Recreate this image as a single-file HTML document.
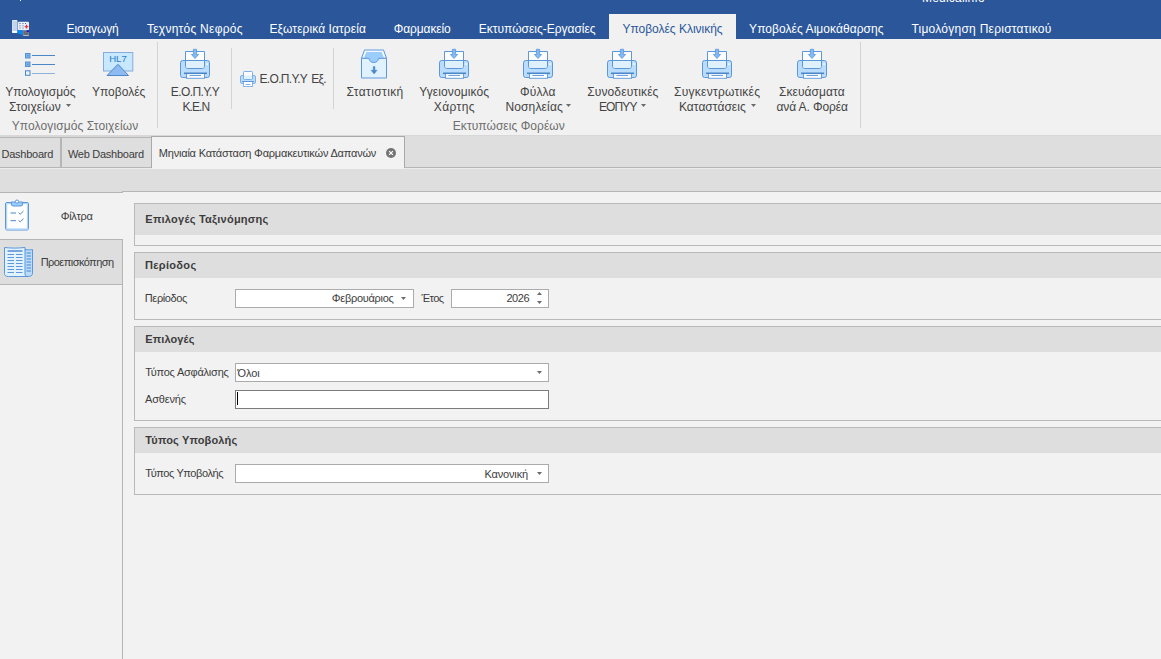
<!DOCTYPE html>
<html lang="el">
<head>
<meta charset="utf-8">
<title>Medicalinfo</title>
<style>
html,body{margin:0;padding:0;}
body{width:1161px;height:659px;overflow:hidden;position:relative;background:#f2f2f2;font-family:"Liberation Sans",sans-serif;font-size:11px;color:#3c3c3c;}
.abs,.t,.box{position:absolute;}
.t{white-space:nowrap;line-height:14px;height:14px;}
/* title + ribbon tabs */
#titlebar{left:0;top:0;width:1161px;height:39px;background:#2b579a;}
#apptitle{left:922px;top:-9px;font-size:12px;color:#fff;letter-spacing:0.2px;}
.rt{color:#fff;font-size:12px;top:22px;}
#rtab-active{left:609px;top:14px;width:127px;height:26px;background:#f1f1f1;}
#rt6{color:#2b579a;}
/* ribbon */
#ribbon{left:0;top:39px;width:1161px;height:96px;background:#f1f1f1;}
.rl{font-size:12px;color:#444;top:85px;text-align:center;}
.rl2{top:100px;}
.gcap{font-size:12px;color:#6e6e6e;top:119px;}
.vsep{width:1px;background:#d4d4d4;}
.arrow{width:0;height:0;border-left:3px solid transparent;border-right:3px solid transparent;border-top:3px solid #555;}
/* document tabs */
#tabstrip{left:0;top:136px;width:1161px;height:32px;background:#dedede;}
#band{left:0;top:169px;width:1161px;height:23px;background:#dedede;}
.dt{font-size:11px;color:#3c3c3c;top:146px;}
/* nav */
.nav{font-size:11px;color:#3c3c3c;}
/* groups */
.grp{left:134px;width:1040px;border:1px solid #b9b9b9;background:#f2f2f2;box-sizing:border-box;}
.ghd{left:135px;width:1030px;background:#dedede;}
.gt{font-weight:bold;font-size:11px;color:#3c3c3c;left:145px;}
.lb{left:145px;font-size:11px;color:#3c3c3c;}
.inp{background:#fff;border:1px solid #ababab;box-sizing:border-box;height:17px;}
.val{font-size:11px;color:#3c3c3c;}

.ln{background:#b6b6b6;}
#tab-active{left:152px;top:137px;width:252px;height:32px;background:#f2f2f2;}
#nav-sel{left:0;top:240px;width:122px;height:44px;background:#dedede;}
.arr{width:0;height:0;border-left:3px solid transparent;border-right:3px solid transparent;border-top:3px solid #6a6a6a;}
.arru{width:0;height:0;border-left:3px solid transparent;border-right:3px solid transparent;border-bottom:3px solid #6a6a6a;}
</style>
</head>
<body>

<!-- ===== title bar and ribbon page headers ===== -->
<div id="titlebar" class="box"></div>
<div id="apptitle" class="t">Medicalinfo</div>
<div class="box" style="left:20px;top:0;width:1px;height:1px;background:#f4f6fa"></div>
<svg class="abs" style="left:11px;top:19px" width="19" height="18" viewBox="0 0 19 18">
<rect x="1" y="1" width="5.500" height="13" rx="1" fill="#e4ecf8"/>
<path d="M1.500 3h4.500M1.500 5h4.500M1.500 7h4.500M1.500 9h4.500M1.500 11h4.500" stroke="#9fb9e0" stroke-width="0.900" fill="none"/>
<rect x="1.500" y="12" width="4.500" height="1.800" fill="#fff"/>
<rect x="7" y="2.800" width="11" height="8.500" rx="1" fill="#eaf0fa"/>
<path d="M8.500 4.500h1M11.500 4.500h1M8.500 6.800h1M11.500 6.800h1M8.500 9h1M11.500 9h1M14 4.500h1" stroke="#3a64b0" stroke-width="1" fill="none"/>
<path d="M13.700 7.600h3.600M15.500 5.800v3.600" stroke="#e8383a" stroke-width="1.400" fill="none"/>
<path d="M6.500 11l5.500 0.300v5.200l-5.500-2.300z" fill="#0a86ee"/>
<rect x="12" y="11.300" width="6" height="5.500" fill="#8d9098"/>
<rect x="15.500" y="11.300" width="2.500" height="2" fill="#1320c8"/>
<path d="M12.500 13h3M12.500 15h5" stroke="#4a4640" stroke-width="1" fill="none"/>
<path d="M12.500 16.500h5" stroke="#c9ccd4" stroke-width="0.800" fill="none"/>
</svg>
<div id="rtab-active" class="box"></div>
<div id="rt1" class="t rt" style="left:66.5px;letter-spacing:-0.11px">Εισαγωγή</div>
<div id="rt2" class="t rt" style="left:147.0px;letter-spacing:0.25px">Τεχνητός Νεφρός</div>
<div id="rt3" class="t rt" style="left:269.5px;letter-spacing:0.08px">Εξωτερικά Ιατρεία</div>
<div id="rt4" class="t rt" style="left:393.8px;letter-spacing:-0.12px">Φαρμακείο</div>
<div id="rt5" class="t rt" style="left:478.8px;letter-spacing:-0.01px">Εκτυπώσεις-Εργασίες</div>
<div id="rt6" class="t rt" style="left:622.5px;letter-spacing:-0.02px">Υποβολές Κλινικής</div>
<div id="rt7" class="t rt" style="left:749.1px;letter-spacing:0.06px">Υποβολές Αιμοκάθαρσης</div>
<div id="rt8" class="t rt" style="left:911.4px;letter-spacing:0.25px">Τιμολόγηση Περιστατικού</div>

<!-- ===== ribbon ===== -->
<div id="ribbon" class="box"></div>
<div class="box vsep" style="left:157px;top:42px;height:86px"></div>
<div class="box vsep" style="left:231px;top:48px;height:61px"></div>
<div class="box vsep" style="left:333px;top:48px;height:61px"></div>
<div class="box vsep" style="left:860px;top:42px;height:86px"></div>

<svg class="abs" style="left:24px;top:52px" width="33" height="26" viewBox="0 0 33 26">
<rect x="1.500" y="1.500" width="4.500" height="4.500" fill="#7fb4ee" stroke="#5590d4"/><rect x="3.200" y="3.200" width="1.200" height="1.200" fill="#4a86c8"/>
<rect x="1.500" y="10" width="4.500" height="4.500" fill="#7fb4ee" stroke="#5590d4"/><rect x="3.200" y="11.700" width="1.200" height="1.200" fill="#4a86c8"/>
<rect x="1.500" y="18.800" width="4.500" height="4.500" fill="#e9f4ff" stroke="#4a86c8"/>
<path d="M8 3.500h23M8 12.500h23" stroke="#4a86c8" stroke-width="1" fill="none"/>
<path d="M8 21.500h23" stroke="#8fb2dc" stroke-width="1" fill="none"/>
</svg>
<svg class="abs" style="left:102px;top:51px" width="33" height="27" viewBox="0 0 33 27">
<rect x="1.500" y="1.500" width="29.300" height="18.500" fill="#c7e8ff" stroke="#86abdd"/>
<path d="M16 13.300l10.500 11.200h-21.500z" fill="#8dbaf1" stroke="#4f86cc" stroke-linejoin="round"/>
<text x="16" y="11.400" font-family="Liberation Sans, sans-serif" font-size="9.600" text-anchor="middle" fill="#2a7fbe">HL7</text>
</svg>
<svg class="abs" style="left:179px;top:47px" width="32" height="33" viewBox="-1 -2 32 33">
<rect x="0.5" y="11.5" width="29" height="17" rx="2.2" fill="#b9dcff" stroke="#5b97d9"/>
<path d="M5.500 2.500h19v14.500a2.500 2.500 0 0 1-2.500 2.500h-14a2.500 2.500 0 0 1-2.500-2.500z" fill="#fff" stroke="#5b97d9"/>
<path d="M6 12h18v5a2 2 0 0 1-2 2h-14a2 2 0 0 1-2-2z" fill="#dff0ff"/>
<path d="M5.500 11.500h19" stroke="#5b97d9" fill="none"/>
<path d="M13.400 0.300h3.200v5.200h2l-3.600 4l-3.600-4h2z" fill="#80bbf6" stroke="#5b97d9" stroke-width="0.800"/>
<rect x="26.200" y="14.200" width="1.800" height="1.800" fill="#f2f9ff"/>
<rect x="6.500" y="24.500" width="18" height="4.800" fill="#fff" stroke="#6aa0dc"/>
<path d="M4 24.300h23" stroke="#4a86c8" stroke-width="1.600" fill="none"/>
<path d="M9.500 26.500h11.500" stroke="#6aa0dc" fill="none"/>
</svg>
<svg class="abs" style="left:239px;top:70px" width="18" height="18" viewBox="0 0 18 18">
<rect x="1.500" y="5.500" width="15" height="8" rx="1.500" fill="#b9dcff" stroke="#7fb0e4"/>
<rect x="4.500" y="1.500" width="9" height="8" rx="0.800" fill="#fff" stroke="#7fb0e4"/>
<rect x="5" y="5.500" width="8" height="3.500" fill="#dff0ff"/>
<rect x="4.500" y="11.500" width="9" height="5" fill="#fff" stroke="#8ab6e4"/>
<path d="M3 11.500h12" stroke="#5b97d9" stroke-width="1" fill="none"/>
<path d="M6.500 14.500h5" stroke="#8ab6e4" fill="none"/>
</svg>
<svg class="abs" style="left:360px;top:48px" width="29" height="32" viewBox="0 0 29 32">
<path d="M1.500 10.300l3-8.300h19l3 8.300z" fill="#f4faff" stroke="#5b97d9" stroke-linejoin="round"/>
<path d="M4 10l2.300-6h15.400l2.300 6z" fill="#9bcdfc"/>
<rect x="8.500" y="9" width="11" height="5.500" fill="#9bcdfc"/>
<path d="M4.200 1.800h19.400" stroke="#a9c9ea" stroke-width="1.200" fill="none"/>
<path d="M1.500 10.300h7.300c1 3 2.400 4.200 5 4.200s4-1.200 5-4.200h7.700v19.700h-25z" fill="#e0f1ff" stroke="#5b97d9" stroke-linejoin="round"/>
<path d="M1.500 30.200h25" stroke="#a9c9ea" stroke-width="1.200" fill="none"/>
<path d="M13.300 18.600h1.600v3.600h2.200l-3 3.700l-3-3.700h2.200z" fill="#4a86c8" stroke="#4a86c8" stroke-width="0.500"/>
</svg>
<svg class="abs" style="left:438px;top:47px" width="32" height="33" viewBox="-1 -2 32 33">
<rect x="0.5" y="11.5" width="29" height="17" rx="2.2" fill="#b9dcff" stroke="#5b97d9"/>
<path d="M5.500 2.500h19v14.500a2.500 2.500 0 0 1-2.500 2.500h-14a2.500 2.500 0 0 1-2.500-2.500z" fill="#fff" stroke="#5b97d9"/>
<path d="M6 12h18v5a2 2 0 0 1-2 2h-14a2 2 0 0 1-2-2z" fill="#dff0ff"/>
<path d="M5.500 11.500h19" stroke="#5b97d9" fill="none"/>
<path d="M13.400 0.300h3.200v5.200h2l-3.600 4l-3.600-4h2z" fill="#80bbf6" stroke="#5b97d9" stroke-width="0.800"/>
<rect x="26.200" y="14.200" width="1.800" height="1.800" fill="#f2f9ff"/>
<rect x="6.500" y="24.500" width="18" height="4.800" fill="#fff" stroke="#6aa0dc"/>
<path d="M4 24.300h23" stroke="#4a86c8" stroke-width="1.600" fill="none"/>
<path d="M9.500 26.500h11.500" stroke="#6aa0dc" fill="none"/>
</svg>
<svg class="abs" style="left:522px;top:47px" width="32" height="33" viewBox="-1 -2 32 33">
<rect x="0.5" y="11.5" width="29" height="17" rx="2.2" fill="#b9dcff" stroke="#5b97d9"/>
<path d="M5.500 2.500h19v14.500a2.500 2.500 0 0 1-2.500 2.500h-14a2.500 2.500 0 0 1-2.500-2.500z" fill="#fff" stroke="#5b97d9"/>
<path d="M6 12h18v5a2 2 0 0 1-2 2h-14a2 2 0 0 1-2-2z" fill="#dff0ff"/>
<path d="M5.500 11.500h19" stroke="#5b97d9" fill="none"/>
<path d="M13.400 0.300h3.200v5.200h2l-3.600 4l-3.600-4h2z" fill="#80bbf6" stroke="#5b97d9" stroke-width="0.800"/>
<rect x="26.200" y="14.200" width="1.800" height="1.800" fill="#f2f9ff"/>
<rect x="6.500" y="24.500" width="18" height="4.800" fill="#fff" stroke="#6aa0dc"/>
<path d="M4 24.300h23" stroke="#4a86c8" stroke-width="1.600" fill="none"/>
<path d="M9.500 26.500h11.500" stroke="#6aa0dc" fill="none"/>
</svg>
<svg class="abs" style="left:606px;top:47px" width="32" height="33" viewBox="-1 -2 32 33">
<rect x="0.5" y="11.5" width="29" height="17" rx="2.2" fill="#b9dcff" stroke="#5b97d9"/>
<path d="M5.500 2.500h19v14.500a2.500 2.500 0 0 1-2.500 2.500h-14a2.500 2.500 0 0 1-2.500-2.500z" fill="#fff" stroke="#5b97d9"/>
<path d="M6 12h18v5a2 2 0 0 1-2 2h-14a2 2 0 0 1-2-2z" fill="#dff0ff"/>
<path d="M5.500 11.500h19" stroke="#5b97d9" fill="none"/>
<path d="M13.400 0.300h3.200v5.200h2l-3.600 4l-3.600-4h2z" fill="#80bbf6" stroke="#5b97d9" stroke-width="0.800"/>
<rect x="26.200" y="14.200" width="1.800" height="1.800" fill="#f2f9ff"/>
<rect x="6.500" y="24.500" width="18" height="4.800" fill="#fff" stroke="#6aa0dc"/>
<path d="M4 24.300h23" stroke="#4a86c8" stroke-width="1.600" fill="none"/>
<path d="M9.500 26.500h11.500" stroke="#6aa0dc" fill="none"/>
</svg>
<svg class="abs" style="left:701px;top:47px" width="32" height="33" viewBox="-1 -2 32 33">
<rect x="0.5" y="11.5" width="29" height="17" rx="2.2" fill="#b9dcff" stroke="#5b97d9"/>
<path d="M5.500 2.500h19v14.500a2.500 2.500 0 0 1-2.500 2.500h-14a2.500 2.500 0 0 1-2.500-2.500z" fill="#fff" stroke="#5b97d9"/>
<path d="M6 12h18v5a2 2 0 0 1-2 2h-14a2 2 0 0 1-2-2z" fill="#dff0ff"/>
<path d="M5.500 11.500h19" stroke="#5b97d9" fill="none"/>
<path d="M13.400 0.300h3.200v5.200h2l-3.600 4l-3.600-4h2z" fill="#80bbf6" stroke="#5b97d9" stroke-width="0.800"/>
<rect x="26.200" y="14.200" width="1.800" height="1.800" fill="#f2f9ff"/>
<rect x="6.500" y="24.500" width="18" height="4.800" fill="#fff" stroke="#6aa0dc"/>
<path d="M4 24.300h23" stroke="#4a86c8" stroke-width="1.600" fill="none"/>
<path d="M9.500 26.500h11.500" stroke="#6aa0dc" fill="none"/>
</svg>
<svg class="abs" style="left:796px;top:47px" width="32" height="33" viewBox="-1 -2 32 33">
<rect x="0.5" y="11.5" width="29" height="17" rx="2.2" fill="#b9dcff" stroke="#5b97d9"/>
<path d="M5.500 2.500h19v14.500a2.500 2.500 0 0 1-2.500 2.500h-14a2.500 2.500 0 0 1-2.500-2.500z" fill="#fff" stroke="#5b97d9"/>
<path d="M6 12h18v5a2 2 0 0 1-2 2h-14a2 2 0 0 1-2-2z" fill="#dff0ff"/>
<path d="M5.500 11.500h19" stroke="#5b97d9" fill="none"/>
<path d="M13.400 0.300h3.200v5.200h2l-3.600 4l-3.600-4h2z" fill="#80bbf6" stroke="#5b97d9" stroke-width="0.800"/>
<rect x="26.200" y="14.200" width="1.800" height="1.800" fill="#f2f9ff"/>
<rect x="6.500" y="24.500" width="18" height="4.800" fill="#fff" stroke="#6aa0dc"/>
<path d="M4 24.300h23" stroke="#4a86c8" stroke-width="1.600" fill="none"/>
<path d="M9.500 26.500h11.500" stroke="#6aa0dc" fill="none"/>
</svg>
<div id="rl1" class="t rl" style="left:5.2px;letter-spacing:-0.02px">Υπολογισμός</div>
<div id="rl2" class="t rl rl2" style="left:9.0px;letter-spacing:0.16px">Στοιχείων</div>
<svg class="abs" style="left:66px;top:104px" width="5" height="3" viewBox="0 0 5 3"><path d="M0 0h5l-2.500 3z" fill="#6a6a6a"/></svg>
<div id="rl3" class="t rl" style="left:92.0px;letter-spacing:0.00px">Υποβολές</div>
<div id="rl4" class="t rl" style="left:170.8px;letter-spacing:-0.60px">Ε.Ο.Π.Υ.Υ</div>
<div id="rl5" class="t rl rl2" style="left:182.5px;letter-spacing:-0.92px">Κ.Ε.Ν</div>
<div id="rl6" class="t rl" style="left:259.5px;top:72px;letter-spacing:-0.68px;word-spacing:1.6px">Ε.Ο.Π.Υ.Υ Εξ.</div>
<div id="rl7" class="t rl" style="left:346.5px;letter-spacing:0.39px">Στατιστική</div>
<div id="rl8" class="t rl" style="left:419.2px;letter-spacing:0.11px">Υγειονομικός</div>
<div id="rl9" class="t rl rl2" style="left:433.8px;letter-spacing:0.40px">Χάρτης</div>
<div id="rl10" class="t rl" style="left:520.1px;letter-spacing:0.10px">Φύλλα</div>
<div id="rl11" class="t rl rl2" style="left:505.4px;letter-spacing:0.16px">Νοσηλείας</div>
<svg class="abs" style="left:566px;top:104px" width="5" height="3" viewBox="0 0 5 3"><path d="M0 0h5l-2.500 3z" fill="#6a6a6a"/></svg>
<div id="rl12" class="t rl" style="left:587.2px;letter-spacing:0.13px">Συνοδευτικές</div>
<div id="rl13" class="t rl rl2" style="left:599px;letter-spacing:-0.9px">ΕΟΠΥΥ</div>
<svg class="abs" style="left:641px;top:104px" width="5" height="3" viewBox="0 0 5 3"><path d="M0 0h5l-2.500 3z" fill="#6a6a6a"/></svg>
<div id="rl14" class="t rl" style="left:674.0px;letter-spacing:0.26px">Συγκεντρωτικές</div>
<div id="rl15" class="t rl rl2" style="left:678.9px;letter-spacing:0.04px">Καταστάσεις</div>
<svg class="abs" style="left:751px;top:104px" width="5" height="3" viewBox="0 0 5 3"><path d="M0 0h5l-2.500 3z" fill="#6a6a6a"/></svg>
<div id="rl16" class="t rl" style="left:779.0px;letter-spacing:0.06px">Σκευάσματα</div>
<div id="rl17" class="t rl rl2" style="left:776.4px;letter-spacing:-0.09px">ανά Α. Φορέα</div>

<div id="gc1" class="t gcap" style="left:11.7px;letter-spacing:0.11px">Υπολογισμός Στοιχείων</div>
<div id="gc2" class="t gcap" style="left:452.8px;letter-spacing:0.05px">Εκτυπώσεις Φορέων</div>

<!-- ===== document tabs ===== -->
<div id="tabstrip" class="box"></div>
<div id="band" class="box"></div>
<div class="box" style="left:0;top:135px;width:1161px;height:1px;background:#d8d8d8"></div>
<div class="box" style="left:0;top:136px;width:151px;height:1px;background:#d8d8d8"></div>
<div class="box" style="left:0;top:168px;width:1161px;height:1px;background:#ebebeb"></div>
<div id="tab-active" class="box"></div>
<div class="box ln" style="left:0;top:137px;width:151px;height:1px"></div>
<div class="box ln" style="left:151px;top:136px;width:254px;height:1px;background:#a9a9a9"></div>
<div class="box ln" style="left:0;top:167px;width:152px;height:1px"></div>
<div class="box ln" style="left:404px;top:167px;width:757px;height:1px"></div>
<div class="box ln" style="left:60px;top:138px;width:2px;height:29px"></div>
<div class="box ln" style="left:151px;top:136px;width:1px;height:32px;background:#a9a9a9"></div>
<div class="box ln" style="left:404px;top:136px;width:1px;height:32px;background:#a9a9a9"></div>
<div class="box ln" style="left:122px;top:191px;width:1039px;height:1px"></div>
<div class="box ln" style="left:0;top:192px;width:123px;height:1px"></div>
<svg class="abs" style="left:385px;top:147px" width="12" height="12" viewBox="0 0 12 12"><circle cx="6" cy="6" r="5" fill="#747474"/><path d="M4.100 4.100l3.800 3.800M7.900 4.100l-3.800 3.800" stroke="#fafafa" stroke-width="1.300" fill="none"/></svg>
<div id="dt1" class="t dt" style="top:147px;left:1.5px;letter-spacing:-0.25px">Dashboard</div>
<div id="dt2" class="t dt" style="top:147px;left:67.9px;letter-spacing:-0.26px">Web Dashboard</div>
<div id="dt3" class="t dt" style="left:158.8px;letter-spacing:-0.20px">Μηνιαία Κατάσταση Φαρμακευτικών Δαπανών</div>

<!-- ===== left navigation ===== -->
<div id="nav-sel" class="box"></div>
<div class="box ln" style="left:0;top:239px;width:123px;height:1px"></div>
<div class="box ln" style="left:0;top:284px;width:123px;height:1px"></div>
<div class="box ln" style="left:122px;top:239px;width:1px;height:420px"></div>
<svg class="abs" style="left:4px;top:199px" width="27" height="33" viewBox="0 0 27 33">
<rect x="1.500" y="3.500" width="23" height="27.500" rx="1.500" fill="#fff" stroke="#5b97d9"/>
<rect x="2.600" y="4.600" width="20.800" height="25.300" fill="none" stroke="#b4d8fb" stroke-width="1.200"/>
<path d="M7.300 3h11.400v2a2 2 0 0 1-2 2h-7.400a2 2 0 0 1-2-2z" fill="#9bcdfc" stroke="#5b97d9"/>
<circle cx="13" cy="2.600" r="1.600" fill="#fff" stroke="#5b97d9"/>
<path d="M6.500 14h5.500M6.500 21.700h5.500" stroke="#4a86c8" stroke-width="1" fill="none"/>
<path d="M14.500 13.700l1.700 1.600l3.300-3.300M14.500 21.300l1.700 1.600l3.300-3.300" stroke="#4a86c8" stroke-width="1" fill="none"/>
</svg>
<svg class="abs" style="left:3px;top:246px" width="31" height="32" viewBox="0 0 31 32">
<path d="M22 3.500c3 0.600 5 0.600 7.500 0v24c0 2-2 3-4.500 3h-6z" fill="#b9dcff" stroke="#5b97d9"/>
<path d="M23.500 7h4.500M23.500 10h4.500M23.500 13h4.500M23.500 16h4.500M23.500 19h4.500M23.500 22h4.500M23.500 25h4.500" stroke="#4a86c8" stroke-width="1" fill="none"/>
<path d="M1.500 1.500c7 0.800 13 0.800 20.500 0v26.500c0 1.500 1.200 2.500 3 2.500h-19.500c-2.500 0-4-1-4-3z" fill="#e3f2ff" stroke="#5b97d9"/>
<path d="M4.500 5h15" stroke="#4a86c8" stroke-width="1.400" fill="none"/>
<path d="M4.500 8.500h6.500M13 8.500h6.500M4.500 11.500h6.500M13 11.500h6.500M4.500 14.500h6.500M13 14.500h6.500M4.500 17.500h6.500M13 17.500h6.500M4.500 20.500h6.500M13 20.500h6.500M4.500 23.500h6.500M13 23.500h6.500M4.500 26.500h6.500M13 26.500h6.500" stroke="#5b97d9" stroke-width="1" fill="none"/>
</svg>
<div id="nav1" class="t nav" style="left:60.7px;top:209px;letter-spacing:-0.32px">Φίλτρα</div>
<div id="nav2" class="t nav" style="left:40.7px;top:255px;letter-spacing:-0.55px">Προεπισκόπηση</div>

<!-- ===== groups ===== -->
<div class="box grp" style="top:203px;height:43px"></div>
<div class="box ghd" style="top:204px;height:31px"></div>
<div id="gt1" class="t gt" style="top:212px;letter-spacing:0.25px;left:145.3px">Επιλογές Ταξινόμησης</div>

<div class="box grp" style="top:252px;height:68px"></div>
<div class="box ghd" style="top:253px;height:25px"></div>
<div id="gt2" class="t gt" style="top:258px;letter-spacing:0.32px;left:145.0px">Περίοδος</div>
<div id="lb1" class="t lb" style="top:291px;letter-spacing:-0.38px;left:144.8px">Περίοδος</div>
<div class="box inp" style="left:235px;top:289px;width:179px;height:19px"></div>
<div id="v1" class="t val" style="left:331.8px;top:291px;letter-spacing:-0.28px">Φεβρουάριος</div>
<svg class="abs" style="left:401px;top:297px" width="5" height="3" viewBox="0 0 5 3"><path d="M0 0h5l-2.500 3z" fill="#6a6a6a"/></svg>
<div id="lb5" class="t lb" style="left:421.6px;top:291px;letter-spacing:-0.60px">Έτος</div>
<div class="box inp" style="left:451px;top:289px;width:98px;height:19px"></div>
<div id="v2" class="t val" style="left:506.4px;top:291px;letter-spacing:-0.43px">2026</div>
<svg class="abs" style="left:536.5px;top:292px" width="5" height="3" viewBox="0 0 5 3"><path d="M0 3h5l-2.500-3z" fill="#6a6a6a"/></svg>
<svg class="abs" style="left:536.5px;top:301px" width="5" height="3" viewBox="0 0 5 3"><path d="M0 0h5l-2.500 3z" fill="#6a6a6a"/></svg>

<div class="box grp" style="top:326px;height:95px"></div>
<div class="box ghd" style="top:327px;height:25px"></div>
<div id="gt3" class="t gt" style="top:332px;letter-spacing:0.13px;left:145.2px">Επιλογές</div>
<div id="lb2" class="t lb" style="top:365px;letter-spacing:-0.23px;left:145.2px">Τύπος Ασφάλισης</div>
<div id="lb3" class="t lb" style="top:392px;letter-spacing:-0.17px;left:145.0px">Ασθενής</div>
<div class="box inp" style="left:235px;top:363px;width:314px;height:19px"></div>
<div id="v3" class="t val" style="left:237.6px;top:366px;letter-spacing:-0.1px">Όλοι</div>
<svg class="abs" style="left:536.5px;top:371px" width="5" height="3" viewBox="0 0 5 3"><path d="M0 0h5l-2.500 3z" fill="#6a6a6a"/></svg>
<div class="box inp" style="left:235px;top:390px;width:314px;height:19px;border-color:#7c7c7c"></div>
<div class="box" style="left:237px;top:392px;width:1px;height:13px;background:#000"></div>

<div class="box grp" style="top:427px;height:68px"></div>
<div class="box ghd" style="top:428px;height:25px"></div>
<div id="gt4" class="t gt" style="top:433px;letter-spacing:0.15px;left:145.3px">Τύπος Υποβολής</div>
<div id="lb4" class="t lb" style="top:466px;letter-spacing:-0.40px;left:145.3px">Τύπος Υποβολής</div>
<div class="box inp" style="left:235px;top:464px;width:314px;height:19px"></div>
<div id="v4" class="t val" style="left:484.4px;top:467px;letter-spacing:-0.14px">Κανονική</div>
<svg class="abs" style="left:536.5px;top:472px" width="5" height="3" viewBox="0 0 5 3"><path d="M0 0h5l-2.500 3z" fill="#6a6a6a"/></svg>

</body>
</html>
